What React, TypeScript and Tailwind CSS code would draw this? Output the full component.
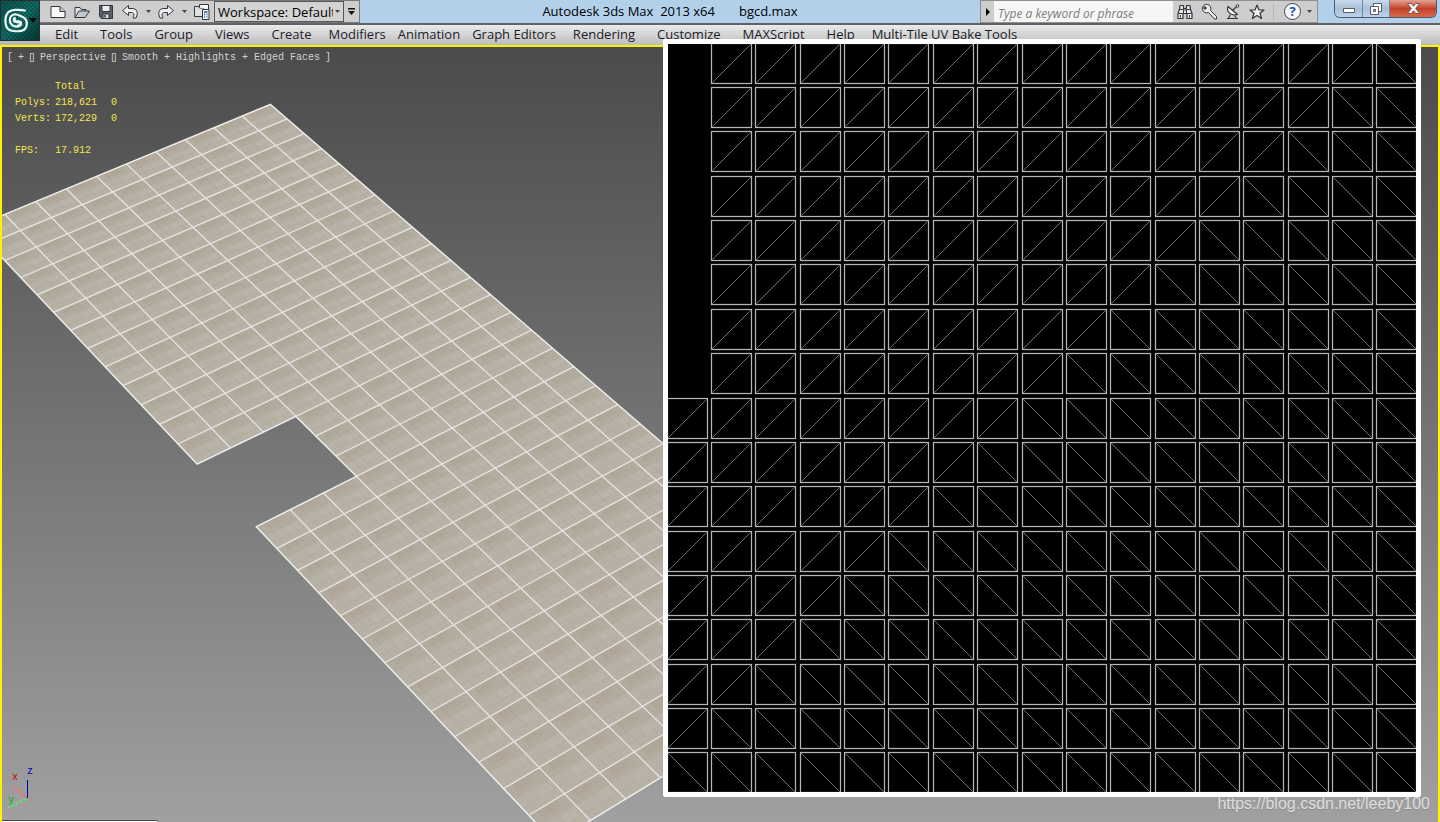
import React, { useState } from 'react';

interface MenuItem {
  label: string;
  wide?: boolean;
}

const MENU_ITEMS: MenuItem[] = [
  { label: 'Edit' },
  { label: 'Tools' },
  { label: 'Group' },
  { label: 'Views' },
  { label: 'Create' },
  { label: 'Modifiers', wide: true },
  { label: 'Animation', wide: true },
  { label: 'Graph Editors', wide: true },
  { label: 'Rendering' },
  { label: 'Customize' },
  { label: 'MAXScript' },
  { label: 'Help' },
  { label: 'Multi-Tile UV Bake Tools', wide: true },
];

// Camera projection of the floor plane: u runs along the short side, v along the long side
const project = (u: number, v: number): string => {
  const w = 1 - 0.006016 * u - 0.007433 * v;
  const x = (270.3 - 29.539 * u + 14.715 * v) / w;
  const y = (104.3 + 10.933 * u + 13.674 * v) / w;
  return `${x.toFixed(1)} ${y.toFixed(1)}`;
};

const FLOOR_OUTLINE: [number, number][] = [
  [0, 0],
  [10, 0],
  [10, 13],
  [7, 13],
  [7, 16],
  [10, 16],
  [10, 29],
  [0, 29],
];

const segment = (u1: number, v1: number, u2: number, v2: number) =>
  `M${project(u1, v1)}L${project(u2, v2)}`;

const quad = (u1: number, v1: number, u2: number, v2: number) =>
  `M${project(u1, v1)}L${project(u2, v1)}L${project(u2, v2)}L${project(u1, v2)}Z`;

const range = (n: number) => Array.from({ length: n }, (_, i) => i);

const outlinePath = `M${FLOOR_OUTLINE.map(([u, v]) => project(u, v)).join('L')}Z`;
const edgePath =
  range(11).map((u) => segment(u, 0, u, 29)).join('') +
  range(30).map((v) => segment(0, v, 10, v)).join('');
const shadePath = range(29).map((v) => quad(0, v, 10, v + 0.4)).join('');
const patchPath = range(29)
  .map((v) => range(10).map((u) => quad(u + 0.12, v + 0.5, u + 0.45, v + 0.75)).join(''))
  .join('');
const stainPath = range(29)
  .map((v) => range(10).map((u) => quad(u + 0.3, v + 0.05, u + 0.8, v + 0.25)).join(''))
  .join('');
const groutPath =
  range(29).map((v) => segment(0, v + 0.42, 10, v + 0.42) + segment(0, v + 0.74, 10, v + 0.74)).join('') +
  range(10)
    .map((u) => segment(u + 0.25, 0, u + 0.25, 29) + segment(u + 0.5, 0, u + 0.5, 29) + segment(u + 0.75, 0, u + 0.75, 29))
    .join('');

const FloorMesh: React.FC = () => (
  <svg className="absolute left-0 top-0" width="1438" height="777" viewBox="2 47 1438 777" aria-hidden="true">
    <clipPath id="floor">
      <path d={outlinePath} />
    </clipPath>
    <g clipPath="url(#floor)">
      <path d={outlinePath} fill="#b8b1a6" />
      <path d={shadePath} fill="#b2ab9e" />
      <path d={stainPath} fill="#aca08f" fillOpacity="0.3" />
      <path d={patchPath} fill="#c0bab1" fillOpacity="0.4" />
      <path d={groutPath} stroke="#9c907e" strokeOpacity="0.2" strokeWidth="0.8" fill="none" />
      <path d={edgePath} stroke="#e6e5e3" strokeWidth="1.3" fill="none" />
    </g>
    <path d={outlinePath} stroke="#ececea" strokeWidth="1.4" fill="none" />
  </svg>
);

const AxisTripod: React.FC = () => (
  <svg className="absolute bottom-3 left-1 font-['Liberation_Mono',monospace] text-[10px]" width="34" height="44" viewBox="6 766 34 44">
    <path d="M27.5 798V780" stroke="#0000b4" />
    <path d="M27 798L12.5 786" stroke="#f0a0a0" strokeWidth="1.6" />
    <path d="M27 798L12.5 786" stroke="#e02020" strokeWidth="0.9" strokeDasharray="2 1" />
    <path d="M27 798.500L8.500 807.500" stroke="#a8e0a8" strokeWidth="1.6" />
    <path d="M27 798.500L8.500 807.500" stroke="#00c000" strokeWidth="0.9" strokeDasharray="2 1" />
    <text x="12" y="780" fill="#c80000">x</text>
    <text x="8" y="803" fill="#00b400">y</text>
    <text x="27" y="774" fill="#0000c8">z</text>
  </svg>
);

const CELLS = 17;
const cellStart = (i: number, first: number) => Math.round(first + (i - 1) * 44.36) + 0.5;

const UvEditor: React.FC = () => (
  <section
    aria-label="UV layout"
    className="absolute right-[19px] top-[39px] z-10 rounded-xs border-5 border-white bg-black"
  >
    <svg className="block" width="748" height="748" viewBox="0 0 748 748">
      {range(CELLS).map((row) =>
        range(CELLS).map((col) => {
          if (col === 0 && row < 8) return null;
          const x = cellStart(col, 43);
          const y = cellStart(row, 43);
          const diagonal = row + col >= 16 ? `M${x} ${y}l40 40` : `M${x} ${y + 40}l40 -40`;
          return (
            <g key={`${row}-${col}`} fill="none">
              <path d={diagonal} stroke="#7c7c7c" strokeWidth="0.9" />
              <rect x={x} y={y} width="40" height="40" stroke="#5a5a5a" strokeOpacity="0.5" strokeWidth="2" />
              <rect x={x} y={y} width="40" height="40" stroke="#b4b6b4" />
            </g>
          );
        })
      )}
    </svg>
  </section>
);

const Caret: React.FC = () => (
  <svg width="5" height="3" viewBox="0 0 5 3" aria-hidden="true">
    <path d="M0 0h5L2.5 3z" fill="#444" />
  </svg>
);

interface ToolButtonProps {
  label: string;
  children: React.ReactNode;
}

const ToolButton: React.FC<ToolButtonProps> = ({ label, children }) => (
  <button type="button" aria-label={label} className="flex h-5 w-4 items-center justify-center">
    <svg width="16" height="16" viewBox="0 0 16 16" fill="none" stroke="#32373c" strokeLinejoin="round">
      {children}
    </svg>
  </button>
);

const AppLogo: React.FC = () => (
  <button
    type="button"
    aria-label="Application menu"
    className="h-[41px] w-10 shrink-0 border border-[#24302f] bg-linear-to-br from-[#0c5350] via-[#127069] to-[#06332f]"
  >
    <svg width="38" height="39" viewBox="0 0 38 39" fill="none" stroke="#edf6f3" strokeLinecap="round">
      <defs>
        <pattern id="weave" width="4" height="4" patternUnits="userSpaceOnUse">
          <path d="M0 0l4 4M4 0L0 4" stroke="#02302d" strokeWidth="0.7" />
        </pattern>
      </defs>
      <path d="M0 0h38v39H0z" fill="url(#weave)" fillOpacity="0.6" stroke="none" />
      <path
        d="M24 9.500C18 8.300 9.500 8.300 6.500 12C3.500 16 3.800 24 6.500 27.500C10 31 20 31 23.500 28.500C27 25 26.500 18.500 22.500 16.500C20 15.300 18.500 14 15.500 13.500C11 13 8.800 15.500 8.800 19C9 24 13 26 17 25.500"
        strokeWidth="2.200"
      />
      <path d="M13.500 17.500C12.500 20.500 14.500 21 17 20.800C20.500 20.800 20.800 24.200 17 25" strokeWidth="3" />
      <path d="M28 17h8l-4 5z" fill="#050909" stroke="none" />
    </svg>
  </button>
);

const QuickAccessToolbar: React.FC = () => {
  const [workspace, setWorkspace] = useState('default');

  return (
    <div className="flex h-[23px] shrink-0 items-center border border-l-0 border-[#77797c] bg-[#cdcdcd] pl-2.5">
      <div className="flex items-center gap-2">
        <ToolButton label="New scene">
          <path d="M1 2.500h9l5 5v6H1z" fill="#f7f8f8" />
          <path d="M10 2.500v5h5" fill="#c9ccd0" />
        </ToolButton>
        <ToolButton label="Open file">
          <path d="M1 13.500v-10h5l1.500 2H12v3" fill="#dfe1e4" />
          <path d="M1 13.500L5 7h10.500l-4.500 6.500z" fill="#c3c9d0" />
        </ToolButton>
        <ToolButton label="Save file">
          <path d="M1.500 1.500h13v13h-11l-2-2z" fill="#59626c" />
          <path d="M4 1.500h8v6H4z" fill="#eceef0" />
          <path d="M5 10h6v4.500H5z" fill="#dcdfe2" />
          <path d="M7 11v2.500" strokeWidth="1.500" />
        </ToolButton>
        <ToolButton label="Undo">
          <path d="M.5 6.500L6.500 1.500v3H10c5 0 6.500 4 4 9.500h-3c2-4 .5-5.500-1.500-5.500h-3v3z" fill="#eceef0" />
        </ToolButton>
      </div>
      <button type="button" aria-label="Undo history" className="flex w-5 justify-center"><Caret /></button>
      <ToolButton label="Redo">
        <path d="M15.500 6.500L9.500 1.500v3H6c-5 0-6.500 4-4 9.500h3c-2-4-.5-5.500 1.500-5.500h3v3z" fill="#eceef0" />
      </ToolButton>
      <button type="button" aria-label="Redo history" className="flex w-5 justify-center"><Caret /></button>
      <ToolButton label="Project folder">
        <path d="M.5 12.500v-10h4l1 1.500h4v8.500z" fill="#dfe1e4" />
        <path d="M5.500 3.500V.500h9v5" fill="#f3f4f5" />
        <path d="M8.500 5.500h6.500v10H8.500z" fill="#eef3f8" />
        <path d="M10 8h3.500M10 10.500h1M12.500 10.500h1M10 13h1M12.500 13h1" stroke="#2a5f9c" strokeWidth="1.500" />
      </ToolButton>
      <div className="relative ml-1">
        <select
          aria-label="Workspace"
          value={workspace}
          onChange={(e) => setWorkspace(e.target.value)}
          className="block h-[21px] w-[130px] appearance-none overflow-hidden border border-[#55575a] bg-[#d3d3d3] pl-[3px] pr-2.5 text-[13px] leading-[18px] text-black"
        >
          <option value="default">Workspace: Default</option>
        </select>
        <span className="pointer-events-none absolute right-1 top-[9px]"><Caret /></span>
      </div>
      <button type="button" aria-label="Customize toolbar" className="flex w-[15px] justify-center">
        <svg width="7" height="7" viewBox="0 0 7 7">
          <path d="M0 0h7v1.500H0zM0 3h7L3.500 7z" fill="#111" />
        </svg>
      </button>
    </div>
  );
};

const InfoCenter: React.FC = () => {
  const [query, setQuery] = useState('');

  return (
    <div className="flex h-[23px] w-[338px] shrink-0 items-center border border-[#8d8f92] bg-[#cdcdcd]">
      <button type="button" aria-label="Collapse search" className="flex w-[13px] justify-center">
        <svg width="4" height="8" viewBox="0 0 4 8"><path d="M0 0v8l4-4z" fill="#000" /></svg>
      </button>
      <input
        type="text"
        aria-label="Search"
        value={query}
        onChange={(e) => setQuery(e.target.value)}
        placeholder="Type a keyword or phrase"
        className="h-[21px] w-[179px] shrink-0 bg-[#f6f6f6] px-1 pt-[3px] text-xs italic text-gray-800 placeholder-[#7c7c7c] outline-none"
      />
      <div className="flex shrink-0 items-center gap-2 pl-1">
        <ToolButton label="Search">
          <path d="M3 1.500h3.500v3h3v-3H13l.5 4 1.500 4v5h-5v-5H6v5H1v-5l1.500-4z" fill="#e9eaeb" strokeWidth="1.200" />
          <path d="M2.500 5.500h4v4h-5M13.500 5.500h-4v4h5M6.500 6h3M3.500 11v2.500M12.500 11v2.500" />
        </ToolButton>
        <ToolButton label="Subscription center">
          <path d="M7.500 8.500l6 6.500h2v-2.500l-6-6A4.300 4.300 0 1 0 7.500 8.500z" fill="#e9eaeb" />
          <circle cx="4" cy="4" r="1.200" fill="#55595d" />
        </ToolButton>
        <ToolButton label="Communication center">
          <path d="M3 2.500c-2 5 3 10 9.500 8z" fill="#f4f4f4" strokeWidth="1.200" />
          <path d="M7.500 6.500l4-4M5 11l-1.500 3.500h8L9.500 11.500M2 14.500h11" strokeWidth="1.200" />
          <circle cx="12.500" cy="2" r="1.300" fill="#eee" />
        </ToolButton>
        <ToolButton label="Favorites">
          <path d="M8 1l2 5h5l-4 3.300 1.600 5.200L8 11.500l-4.600 3L5 9.300 1 6h5z" fill="#f0f0f0" strokeWidth="1.200" />
        </ToolButton>
      </div>
      <span className="mx-2 h-4 w-px shrink-0 bg-[#b2b2b2]" />
      <button type="button" aria-label="Help" className="ml-0.5 flex size-[17px] shrink-0 items-center justify-center rounded-full border border-[#40474e] bg-[#f4f8fc] text-[13px] font-bold leading-none text-[#1c4fa3]">
        ?
      </button>
      <button type="button" aria-label="Help menu" className="flex w-4 justify-center"><Caret /></button>
    </div>
  );
};

const WindowButtons: React.FC = () => (
  <div className="ml-4 mr-[3px] flex h-[18px] shrink-0 self-start overflow-hidden rounded-b-md border border-t-0 border-[#4c5a6c]">
    <button type="button" aria-label="Minimize" className="flex w-7 items-center justify-center border-r border-[#74869b] bg-linear-to-b from-[#c9daee] via-[#a9bfd8] to-[#bdd3ea] pt-1">
      <svg width="12" height="5" viewBox="0 0 12 5"><path d="M.5.500h11v4H.5z" fill="#fff" stroke="#535b66" /></svg>
    </button>
    <button type="button" aria-label="Restore" className="flex w-[27px] items-center justify-center border-r border-[#74869b] bg-linear-to-b from-[#c9daee] via-[#a9bfd8] to-[#bdd3ea]">
      <svg width="12" height="12" viewBox="0 0 12 12" fill="#fff" stroke="#535b66">
        <path d="M3.500.500h8v8h-8z" />
        <path d="M.5 3.500h8v8h-8z" />
        <path d="M3.500 6.500h2v2h-2z" fill="#a9bfd8" />
      </svg>
    </button>
    <button type="button" aria-label="Close" className="flex w-[46px] items-center justify-center bg-linear-to-b from-[#e2a293] via-[#c2412a] to-[#d8694a]">
      <svg width="13" height="11" viewBox="0 0 13 11">
        <path d="M.5.500h3.500l2.500 2.700L9 .500h3.500L8.600 5.500l3.900 5H9L6.500 7.800 4 10.500H.5l3.900-5z" fill="#fff" stroke="#5a4648" strokeWidth="0.8" />
      </svg>
    </button>
  </div>
);

const Statistics: React.FC = () => (
  <table className="absolute left-[13px] top-8 border-collapse font-['Liberation_Mono',monospace] text-[10px] leading-4 text-[#f4e64e]">
    <tbody>
      <tr><td className="w-10 p-0" /><td className="w-14 p-0">Total</td><td className="p-0" /></tr>
      <tr><td className="p-0">Polys:</td><td className="p-0">218,621</td><td className="p-0">0</td></tr>
      <tr><td className="p-0">Verts:</td><td className="p-0">172,229</td><td className="p-0">0</td></tr>
      <tr className="h-8 align-bottom"><td className="p-0">FPS:</td><td className="p-0">17.912</td><td className="p-0" /></tr>
    </tbody>
  </table>
);

const App: React.FC = () => {
  return (
    <div className="relative flex min-h-screen flex-col overflow-hidden bg-[#c4c4c4] font-['Open_Sans','Noto_Sans',sans-serif] text-[13px]">
      <header className="flex h-[45px] shrink-0 bg-linear-to-b from-[#d8d8d8] to-[#b8b8b8]">
        <AppLogo />
        <div className="flex min-w-0 flex-1 flex-col">
          <div className="flex h-[25px] items-start border-b-2 border-[#5f6266] bg-[#b3d0eb]">
            <QuickAccessToolbar />
            <h1 className="flex h-6 flex-1 items-center justify-center gap-6 whitespace-nowrap text-black">
              <span className="whitespace-pre">Autodesk 3ds Max  2013 x64</span>
              <span>bgcd.max</span>
            </h1>
            <InfoCenter />
            <WindowButtons />
          </div>
          <nav className="flex h-5 items-center bg-linear-to-b from-[#ebebeb] to-[#bcbcbc] pl-1">
            {MENU_ITEMS.map((item) => (
              <button
                key={item.label}
                type="button"
                className={`whitespace-nowrap text-[#1c1c28] ${item.wide ? 'px-1.5' : 'px-[11px]'}`}
              >
                {item.label}
              </button>
            ))}
          </nav>
        </div>
      </header>

      <main className="relative flex-1 overflow-hidden border-2 border-b-0 border-[#fff200] bg-linear-to-b from-[#4b4b4b] to-[#a0a0a0]">
        <FloorMesh />
        <div className="relative flex h-5 items-center gap-[5px] whitespace-nowrap pl-[5px] font-['Liberation_Mono',monospace] text-[10px] text-[#d2d2d2]">
          <span>[</span>
          <span>+</span>
          <span className="flex w-[6px] justify-center text-sm leading-none">▯</span>
          <span>Perspective</span>
          <span className="flex w-[6px] justify-center text-sm leading-none">▯</span>
          <span>Smooth + Highlights + Edged Faces</span>
          <span>]</span>
        </div>
        <Statistics />
        <AxisTripod />
        <p className="absolute bottom-2 right-2 text-base leading-5 font-['Liberation_Sans',sans-serif] text-[#dedede] text-shadow-2xs">
          https://blog.csdn.net/leeby100
        </p>
        <div className="absolute -left-0.5 bottom-0 h-0.5 w-[158px] rounded-tr-sm border-t border-[#4a4a4a] bg-white" />
      </main>

      <UvEditor />
    </div>
  );
};

export default App;
